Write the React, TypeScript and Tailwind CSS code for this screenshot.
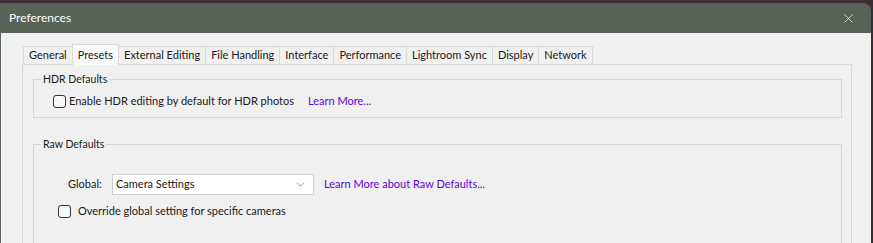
import { X, ChevronDown } from 'lucide-react';

const tabs = [
  'General',
  'Presets',
  'External Editing',
  'File Handling',
  'Interface',
  'Performance',
  'Lightroom Sync',
  'Display',
  'Network',
];

function Checkbox() {
  return <span className="block w-[13px] h-[13px] shrink-0 rounded-[3px] border border-[#333333] bg-[#f7f7f7]" />;
}

function GroupBox({ title, className, children }: { title: string; className: string; children: React.ReactNode }) {
  return (
    <div className={`relative border border-[#d7d7d7] ${className}`}>
      <span className="absolute left-[7px] top-[-9px] bg-[#f0f0f0] px-[2px] text-[10.5px] leading-[16px] text-[#1a1a1a]">
        {title}
      </span>
      {children}
    </div>
  );
}

export default function App() {
  return (
    <div
      className="w-[873px] h-[243px] overflow-hidden bg-[#3a2d35] pt-[3px] text-[11px] text-[#1a1a1a]"
      style={{ fontFamily: 'Lato, "Noto Sans", sans-serif' }}
    >
      <div className="h-full flex flex-col bg-[#566356] rounded-tr-[8px] mr-[2px]">
        <div className="h-[30px] shrink-0 flex items-center justify-between pl-[9px] pr-[15px]">
          <span className="text-[12px] text-white">Preferences</span>
          <X className="w-[15px] h-[15px] text-white" strokeWidth={1.1} />
        </div>
        <div className="flex-1 bg-[#f0f0f0] ml-[1px] pl-[21px] pr-[19px] pt-[10px]">
          <div className="flex items-end h-[21px] pl-[1px]">
            {tabs.map((t) =>
              t === 'Presets' ? (
                <div
                  key={t}
                  className="relative z-10 h-[21px] mb-[-1px] px-[5px] flex items-start pt-[2px] border border-b-0 border-[#d9d9d9] bg-[#f9f9f9] -ml-px"
                >
                  {t}
                </div>
              ) : (
                <div
                  key={t}
                  className="h-[18px] px-[5px] flex items-center border border-b-0 border-[#d9d9d9] bg-[#f0f0f0] -ml-px first:ml-0"
                >
                  {t}
                </div>
              )
            )}
          </div>
          <div className="h-[200px] border border-[#d9d9d9] bg-[#f0f0f0] pl-[10px] pr-[9px] pt-[14px]">
            <GroupBox title="HDR Defaults" className="h-[39px] flex items-center pl-[19px] pt-[5px]">
              <Checkbox />
              <span className="ml-[3px]">Enable HDR editing by default for HDR photos</span>
              <span className="ml-[14px] text-[#6200d8]">Learn More...</span>
            </GroupBox>
            <GroupBox title="Raw Defaults" className="mt-[26px] h-[120px] pl-[24px] pt-[29px]">
              <div className="flex items-center pl-[10px]">
                <span className="w-[33px]">Global:</span>
                <div className="ml-[11px] w-[202px] h-[21px] flex items-center justify-between border border-[#d0d0d0] bg-white pl-[3px] pr-[6px]">
                  <span>Camera Settings</span>
                  <ChevronDown className="w-[13px] h-[13px] text-[#555555]" strokeWidth={1.2} />
                </div>
                <span className="ml-[10px] text-[#6200d8]">Learn More about Raw Defaults...</span>
              </div>
              <div className="flex items-center mt-[8px]">
                <Checkbox />
                <span className="ml-[7px]">Override global setting for specific cameras</span>
              </div>
            </GroupBox>
          </div>
        </div>
      </div>
    </div>
  );
}
